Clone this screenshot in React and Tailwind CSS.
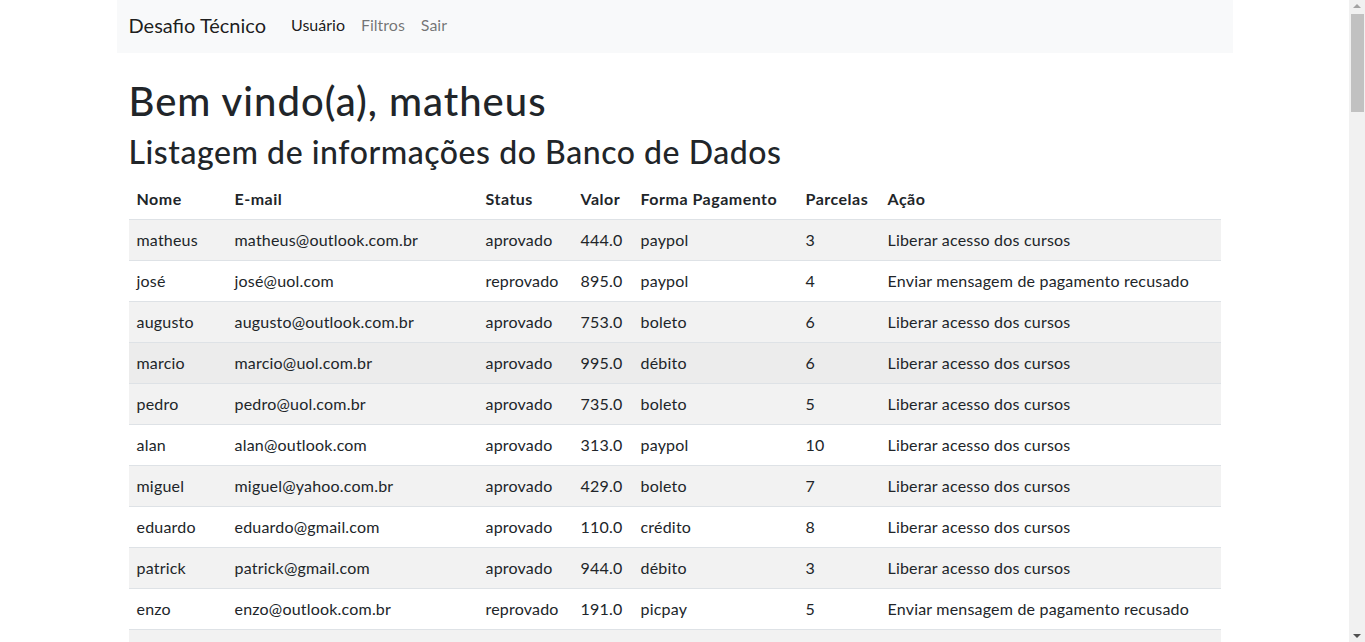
import React from "react";

const rows = [
  ["matheus", "matheus@outlook.com.br", "aprovado", "444.0", "paypol", "3", "Liberar acesso dos cursos"],
  ["josé", "josé@uol.com", "reprovado", "895.0", "paypol", "4", "Enviar mensagem de pagamento recusado"],
  ["augusto", "augusto@outlook.com.br", "aprovado", "753.0", "boleto", "6", "Liberar acesso dos cursos"],
  ["marcio", "marcio@uol.com.br", "aprovado", "995.0", "débito", "6", "Liberar acesso dos cursos"],
  ["pedro", "pedro@uol.com.br", "aprovado", "735.0", "boleto", "5", "Liberar acesso dos cursos"],
  ["alan", "alan@outlook.com", "aprovado", "313.0", "paypol", "10", "Liberar acesso dos cursos"],
  ["miguel", "miguel@yahoo.com.br", "aprovado", "429.0", "boleto", "7", "Liberar acesso dos cursos"],
  ["eduardo", "eduardo@gmail.com", "aprovado", "110.0", "crédito", "8", "Liberar acesso dos cursos"],
  ["patrick", "patrick@gmail.com", "aprovado", "944.0", "débito", "3", "Liberar acesso dos cursos"],
  ["enzo", "enzo@outlook.com.br", "reprovado", "191.0", "picpay", "5", "Enviar mensagem de pagamento recusado"],
  ["", "", "", "", "", "", ""],
];

const headers = ["Nome", "E-mail", "Status", "Valor", "Forma Pagamento", "Parcelas", "Ação"];
const widths = ["w-[98px]", "w-[251px]", "w-[95px]", "w-[60px]", "w-[165px]", "w-[82px]", "w-[341px]"];

function Scrollbar() {
  return (
    <div className="flex h-full w-4 shrink-0 flex-col bg-[#f1f1f1]">
      <div className="flex h-[14px] justify-center pt-1">
        <svg width="8" height="4" viewBox="0 0 8 4">
          <path d="M0 4 L4 0 L8 4 Z" fill="#a3a3a3" />
        </svg>
      </div>
      <div className="ml-[2px] h-[98px] w-[13px] bg-[#c1c1c1]" />
      <div className="flex-1" />
      <div className="flex h-[8px] justify-center pb-1">
        <svg width="8" height="4" viewBox="0 0 8 4">
          <path d="M0 0 L8 0 L4 4 Z" fill="#505050" />
        </svg>
      </div>
    </div>
  );
}

export default function App() {
  return (
    <div className="flex h-screen overflow-hidden bg-white text-[#212529] font-['Segoe_UI',Lato,'Liberation_Sans',sans-serif]">
      <div className="min-w-0 flex-1 overflow-hidden">
        <div className="mx-auto w-[1140px] px-3">
          <nav className="flex h-[53px] items-center bg-[#f8f9fa] px-3 pb-[3px]">
            <span className="mr-[25px] text-[20px] leading-[30px] text-black/90">Desafio Técnico</span>
            <div className="flex gap-4 text-[16px] leading-6">
              <span className="text-black/90">Usuário</span>
              <span className="text-black/55">Filtros</span>
              <span className="text-black/55">Sair</span>
            </div>
          </nav>
        </div>
        <div className="mx-auto w-[1140px] px-3">
          <div className="px-3">
            <h1 className="mt-[24px] mb-2 text-[40px] leading-[48px] font-medium tracking-[1px]">Bem vindo(a), matheus</h1>
            <h2 className="mb-2 text-[32px] leading-[38px] font-medium tracking-[0.55px]">Listagem de informações do Banco de Dados</h2>
            <table className="w-full table-fixed border-collapse text-[16px] leading-6 tracking-[0.2px]">
              <thead>
                <tr className="border-b border-[#dee2e6]">
                  {headers.map((h, i) => (
                    <th key={h} className={`${widths[i]} px-2 py-2 text-left font-bold tracking-[0.5px]`}>{h}</th>
                  ))}
                </tr>
              </thead>
              <tbody>
                {rows.map((r, idx) => (
                  <tr
                    key={idx}
                    className={`border-b border-[#dee2e6] ${idx === 3 ? "bg-[#ececec]" : idx % 2 === 0 ? "bg-[#f2f2f2]" : "bg-white"}`}
                  >
                    {r.map((c, i) => (
                      <td key={i} className="h-[40px] px-2 py-2 whitespace-nowrap">{c}</td>
                    ))}
                  </tr>
                ))}
              </tbody>
            </table>
            <div className="h-10" />
          </div>
        </div>
      </div>
      <Scrollbar />
    </div>
  );
}
